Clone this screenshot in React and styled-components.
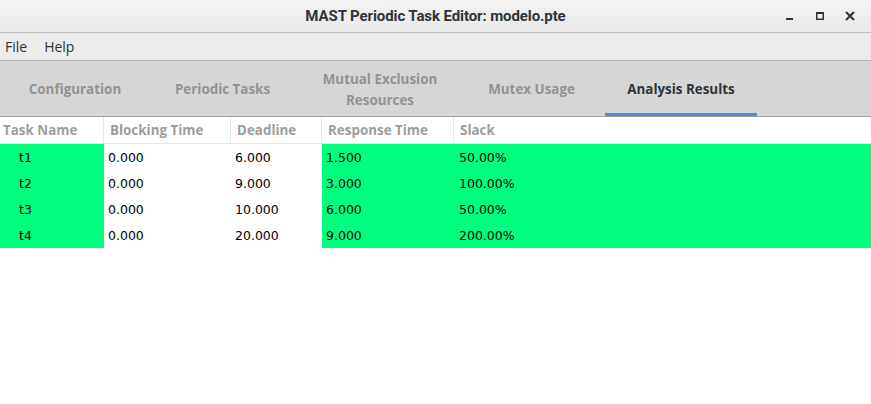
import React from "react";
import styled, { createGlobalStyle } from "styled-components";

const Global = createGlobalStyle`
  html, body { margin: 0; padding: 0; background: #ffffff; }
  body { font-family: "Open Sans", "Noto Sans", sans-serif; }
  * { box-sizing: border-box; }
`;

const Window = styled.div`
  width: 871px;
  height: 404px;
  display: flex;
  flex-direction: column;
  background: #ffffff;
  overflow: hidden;
`;

const TitleBar = styled.div`
  height: 33px;
  flex: none;
  display: grid;
  grid-template-columns: 1fr auto 1fr;
  align-items: center;
  background: linear-gradient(#f3f3f3, #e9e9e9);
  border-bottom: 1px solid #bdbdbd;
`;

const Title = styled.div`
  grid-column: 2;
  font-family: Roboto, "Noto Sans", sans-serif;
  font-weight: 700;
  font-size: 15px;
  color: #2e3436;
  letter-spacing: -0.1px;
`;

const Controls = styled.div`
  grid-column: 3;
  justify-self: end;
  display: flex;
  align-items: center;
  padding-right: 6px;
  height: 100%;
`;

const CtrlBtn = styled.div`
  width: 30px;
  height: 100%;
  display: flex;
  align-items: center;
  justify-content: center;
  color: #2e3436;
`;

const MenuBar = styled.div`
  height: 28px;
  flex: none;
  display: flex;
  align-items: center;
  gap: 17px;
  padding-left: 5px;
  background: #ececec;
  border-bottom: 1px solid #b4b4b4;
  font-family: "Open Sans", sans-serif;
  font-size: 14px;
  color: #2e3436;
`;

const MenuItem = styled.span``;

const TabBar = styled.div`
  height: 56px;
  flex: none;
  display: flex;
  align-items: stretch;
  gap: 8px;
  padding-left: 7px;
  background: #d6d6d6;
  border-bottom: 1px solid #9e9e9e;
`;

const Tab = styled.div`
  width: ${(p) => p.$w}px;
  display: flex;
  align-items: center;
  justify-content: center;
  text-align: center;
  font-family: "Open Sans", sans-serif;
  font-weight: 700;
  font-size: 13.4px;
  line-height: 21px;
  white-space: pre-line;
  color: ${(p) => (p.$active ? "#2e3436" : "#929292")};
  border-bottom: 3px solid ${(p) => (p.$active ? "#4a90d9" : "transparent")};
  padding-top: 5px;
`;

const Table = styled.div`
  display: grid;
  grid-template-columns: 104px 127px 91px 132px 1fr;
`;

const HeadCell = styled.div`
  height: 27px;
  display: flex;
  align-items: center;
  padding-left: ${(p) => (p.$first ? 3 : 6)}px;
  font-family: "Open Sans", sans-serif;
  font-weight: 700;
  font-size: 13.4px;
  color: #9d9d9d;
  border-bottom: 1px solid #e6e6e6;
  border-right: ${(p) => (p.$last ? "none" : "1px solid #e6e6e6")};
`;

const Cell = styled.div`
  height: 26px;
  display: flex;
  align-items: center;
  padding-left: ${(p) => p.$pad}px;
  font-family: "DejaVu Sans", sans-serif;
  font-size: 12.5px;
  color: #000000;
  background: ${(p) => (p.$green ? "#00ff7f" : "#ffffff")};
`;

const tabs = [
  { label: "Configuration", w: 136 },
  { label: "Periodic Tasks", w: 143 },
  { label: "Mutual Exclusion\nResources", w: 156 },
  { label: "Mutex Usage", w: 131 },
  { label: "Analysis Results", w: 152, active: true },
];

const headers = ["Task Name", "Blocking Time", "Deadline", "Response Time", "Slack"];

const rows = [
  ["t1", "0.000", "6.000", "1.500", "50.00%"],
  ["t2", "0.000", "9.000", "3.000", "100.00%"],
  ["t3", "0.000", "10.000", "6.000", "50.00%"],
  ["t4", "0.000", "20.000", "9.000", "200.00%"],
];

const green = [true, false, false, true, true];
const pads = [19, 4, 4, 4, 5];

export default function App() {
  return (
    <>
      <Global />
      <Window>
        <TitleBar>
          <Title>MAST Periodic Task Editor: modelo.pte</Title>
          <Controls>
            <CtrlBtn>
              <svg width="10" height="10" viewBox="0 0 10 10">
                <rect x="1" y="7" width="7" height="2" fill="currentColor" />
              </svg>
            </CtrlBtn>
            <CtrlBtn>
              <svg width="10" height="10" viewBox="0 0 10 10">
                <rect x="1.75" y="1.75" width="6.5" height="6.5" fill="none" stroke="currentColor" strokeWidth="1.5" />
                <rect x="1" y="1" width="8" height="2" fill="currentColor" />
              </svg>
            </CtrlBtn>
            <CtrlBtn>
              <svg width="10" height="10" viewBox="0 0 10 10">
                <path d="M1 1 L9 9 M9 1 L1 9" stroke="currentColor" strokeWidth="2" />
              </svg>
            </CtrlBtn>
          </Controls>
        </TitleBar>
        <MenuBar>
          <MenuItem>File</MenuItem>
          <MenuItem>Help</MenuItem>
        </MenuBar>
        <TabBar>
          {tabs.map((t) => (
            <Tab key={t.label} $w={t.w} $active={t.active}>
              {t.label}
            </Tab>
          ))}
        </TabBar>
        <Table>
          {headers.map((h, i) => (
            <HeadCell key={h} $first={i === 0} $last={i === headers.length - 1}>
              {h}
            </HeadCell>
          ))}
          {rows.map((r) =>
            r.map((v, i) => (
              <Cell key={r[0] + i} $green={green[i]} $pad={pads[i]}>
                {v}
              </Cell>
            ))
          )}
        </Table>
      </Window>
    </>
  );
}
